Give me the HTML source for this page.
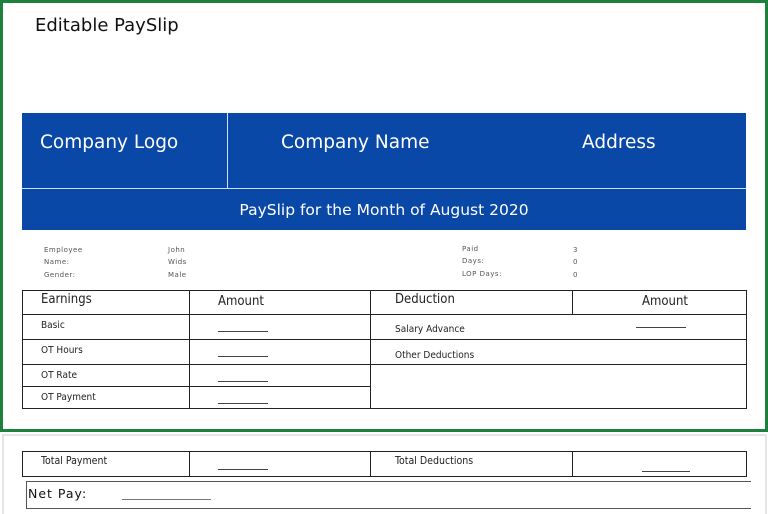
<!DOCTYPE html>
<html><head><style>
*{margin:0;padding:0;box-sizing:border-box}
body{width:768px;height:512px;background:#fff;position:relative;overflow:hidden;font-family:"Liberation Sans",sans-serif}
.a{position:absolute}
.w{color:#fff;font-family:"DejaVu Sans",sans-serif;white-space:nowrap}
.t{font-family:"DejaVu Sans Condensed","Liberation Sans Narrow",sans-serif;color:#222;white-space:nowrap}
.s{font-family:"DejaVu Sans",sans-serif;font-size:7px;color:#555;letter-spacing:.5px}
.l{background:#222}
.u{height:1px;background:#444}
</style></head><body>
<div class="a" style="left:0;top:0;width:768px;height:432px;border:3px solid #1f7f3d"></div>
<div class="a" style="left:2px;top:434px;width:765px;height:80px;border:2px solid #e3e6e3;border-bottom:none"></div>
<div class="a" style="left:35px;top:15px;font-family:'DejaVu Sans',sans-serif;font-size:18px;color:#111">Editable PaySlip</div>

<div class="a" style="left:22px;top:113px;width:724px;height:117px;background:#0a48a8"></div>
<div class="a" style="left:227px;top:113px;width:1px;height:75px;background:#cfe0ff"></div>
<div class="a" style="left:22px;top:188px;width:724px;height:1px;background:#cfe0ff"></div>
<div class="a w" style="left:40px;top:132px;font-size:18.5px">Company Logo</div>
<div class="a w" style="left:281px;top:132px;font-size:18.5px">Company Name</div>
<div class="a w" style="left:582px;top:132px;font-size:18.5px">Address</div>
<div class="a w" style="left:22px;width:724px;text-align:center;top:201px;font-size:15.5px">PaySlip for the Month of August 2020</div>

<div class="a s" style="left:44px;top:246px">Employee</div>
<div class="a s" style="left:44px;top:258px">Name:</div>
<div class="a s" style="left:44px;top:271px">Gender:</div>
<div class="a s" style="left:168px;top:246px">John</div>
<div class="a s" style="left:168px;top:258px">Wids</div>
<div class="a s" style="left:168px;top:271px">Male</div>
<div class="a s" style="left:462px;top:245px">Paid</div>
<div class="a s" style="left:462px;top:257px">Days:</div>
<div class="a s" style="left:462px;top:270px">LOP Days:</div>
<div class="a s" style="left:573px;top:246px">3</div>
<div class="a s" style="left:573px;top:258px">0</div>
<div class="a s" style="left:573px;top:271px">0</div>

<div class="a" style="left:22px;top:290px;width:725px;height:119px;border:1.5px solid #222"></div>
<div class="a l" style="left:189px;top:290px;width:1px;height:119px"></div>
<div class="a l" style="left:370px;top:290px;width:1px;height:119px"></div>
<div class="a l" style="left:572px;top:290px;width:1px;height:24px"></div>
<div class="a l" style="left:22px;top:314px;width:725px;height:1px"></div>
<div class="a l" style="left:22px;top:339px;width:725px;height:1px"></div>
<div class="a l" style="left:22px;top:364px;width:725px;height:1px"></div>
<div class="a l" style="left:22px;top:386px;width:348px;height:1px"></div>
<div class="a t" style="left:41px;top:292px;font-size:13px">Earnings</div>
<div class="a t" style="left:218px;top:294px;font-size:13px">Amount</div>
<div class="a t" style="left:395px;top:292px;font-size:13px">Deduction</div>
<div class="a t" style="left:642px;top:294px;font-size:13px">Amount</div>
<div class="a t" style="left:41px;top:320px;font-size:10px">Basic</div>
<div class="a t" style="left:41px;top:345px;font-size:10px">OT Hours</div>
<div class="a t" style="left:41px;top:370px;font-size:10px">OT Rate</div>
<div class="a t" style="left:41px;top:392px;font-size:10px">OT Payment</div>
<div class="a t" style="left:395px;top:324px;font-size:10px">Salary Advance</div>
<div class="a t" style="left:395px;top:350px;font-size:10px">Other Deductions</div>
<div class="a u" style="left:218px;top:331px;width:50px"></div>
<div class="a u" style="left:218px;top:356px;width:50px"></div>
<div class="a u" style="left:218px;top:381px;width:50px"></div>
<div class="a u" style="left:218px;top:403px;width:50px"></div>
<div class="a u" style="left:636px;top:327px;width:50px"></div>

<div class="a" style="left:22px;top:451px;width:725px;height:26px;border:1.5px solid #222"></div>
<div class="a l" style="left:189px;top:451px;width:1px;height:26px"></div>
<div class="a l" style="left:370px;top:451px;width:1px;height:26px"></div>
<div class="a l" style="left:572px;top:451px;width:1px;height:26px"></div>
<div class="a t" style="left:41px;top:455px;font-size:10.5px">Total Payment</div>
<div class="a t" style="left:395px;top:455px;font-size:10.5px">Total Deductions</div>
<div class="a u" style="left:218px;top:469px;width:50px"></div>
<div class="a u" style="left:642px;top:471px;width:48px"></div>

<div class="a" style="left:26px;top:481px;width:725px;height:28px;border-top:1.5px solid #555;border-bottom:1.5px solid #555;border-left:1.5px solid #555"></div>
<div class="a" style="left:28px;top:486px;font-family:'DejaVu Sans',sans-serif;font-size:12.5px;color:#111;letter-spacing:1px">Net Pay:</div>
<div class="a" style="left:122px;top:499px;width:89px;height:1px;background:#777"></div>
</body></html>
